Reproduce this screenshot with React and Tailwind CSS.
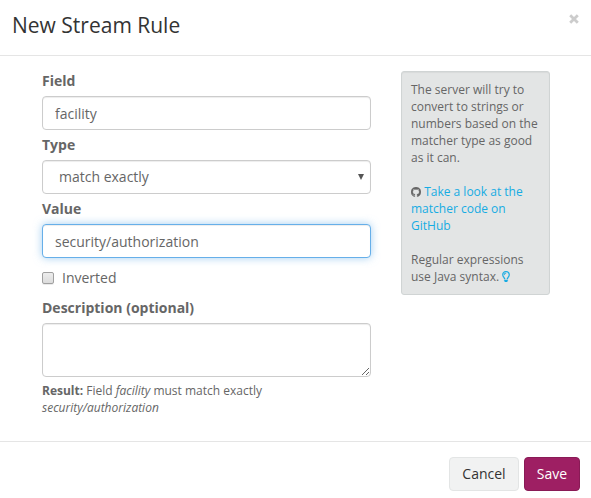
import React from "react";
import { FaRegLightbulb } from "react-icons/fa";

const control =
  "block w-full h-[34px] rounded border border-[#ccc] bg-white px-3 py-1.5 text-sm leading-5 text-[#666] shadow-[inset_0_1px_1px_rgba(0,0,0,0.075)] outline-none";

function Label({ children }) {
  return <label className="mb-[5px] block font-bold leading-5">{children}</label>;
}

function GithubIcon() {
  return (
    <svg className="inline-block h-[10px] w-[10px] align-[-1px]" viewBox="128 128 1536 1536" preserveAspectRatio="none" fill="currentColor" stroke="currentColor" strokeWidth="50">
      <path d="M896 128q209 0 385.5 103t279.5 279.5 103 385.5q0 251-146.5 451.5t-378.5 277.5q-27 5-40-7t-13-30q0-3 .5-76.5t.5-134.5q0-97-52-142 57-6 102.5-18t94-39 81-66.5 53-105 20.5-150.5q0-119-79-206 37-91-8-204-28-9-81 11t-92 44l-38 24q-93-26-192-26t-192 26q-16-11-42.5-27t-83.5-38.5-85-13.5q-45 113-8 204-79 87-79 206 0 85 20.5 150t52.5 105 80.5 67 94 39 102.5 18q-39 36-49 103-21 10-45 15t-57 5-65.5-21.5-55.5-62.5q-19-32-48.5-52t-49.5-24l-20-3q-21 0-29 4.5t-5 11.5 9 14 13 12l7 5q22 10 43.5 38t31.5 51l10 23q13 38 44 61.5t67 30 69.5 7 55.5-3.5l23-4q0 38 .5 88.5t.5 54.5q0 18-13 30t-40 7q-232-77-378.5-277.5t-146.5-451.5q0-209 103-385.5t279.5-279.5 385.5-103z" />
    </svg>
  );
}

export default function App() {
  return (
    <div className="flex h-[498px] w-[591px] flex-col overflow-hidden bg-white font-['Open_Sans','Noto_Sans',sans-serif] text-sm leading-5 text-[#666]">
      <header className="flex h-14 shrink-0 items-start justify-between border-b border-[#e5e5e5] pl-3 pr-[12px]">
        <h4 className="pt-[10px] text-[21px] leading-[30px] text-[#333]">New Stream Rule</h4>
        <button aria-label="Close" className="mt-[13px] flex h-[11px] w-[10px] items-center justify-center">
          <svg className="h-[10px] w-[10px]" viewBox="0 0 10 10" fill="none" stroke="#ccc" strokeWidth="2.8">
            <path d="M1.2 1.2L8.8 8.8M8.8 1.2L1.2 8.8" />
          </svg>
        </button>
      </header>

      <main className="flex h-[385px] shrink-0 items-start pl-[42px] pt-[15px]">
        <form className="w-[329px]">
          <Label>Field</Label>
          <input className={control} defaultValue="facility" />
          <div className="mt-[5px]">
            <Label>Type</Label>
            <div className={control + " flex items-center justify-between !pl-4 !pr-1.5"}>
              <span>match exactly</span>
              <svg className="h-[6px] w-[6px]" viewBox="0 0 6 6" fill="#555">
                <path d="M0 0H6L3 6Z" />
              </svg>
            </div>
          </div>
          <div className="mt-[5px]">
            <Label>Value</Label>
            <input
              className="block h-[34px] w-full rounded border border-[#66afe9] bg-white px-3 py-1.5 text-sm leading-5 text-[#666] shadow-[inset_0_1px_1px_rgba(0,0,0,0.075),0_0_8px_rgba(102,175,233,0.6)] outline-none"
              defaultValue="security/authorization"
            />
          </div>
          <div className="mt-[10px] flex h-5 items-center gap-2">
            <span
              role="checkbox"
              aria-checked="false"
              className="h-3 w-3 rounded-[2px] border border-[#a0a0a0] bg-linear-to-b from-[#ededed] to-[#dcdcdc] shadow-[0_1px_0_rgba(0,0,0,0.08)]"
            />
            <span>Inverted</span>
          </div>
          <div className="mt-[10px]">
            <Label>Description (optional)</Label>
            <textarea className="block h-[54px] w-full resize-y rounded border border-[#ccc] bg-white px-3 py-1.5 shadow-[inset_0_1px_1px_rgba(0,0,0,0.075)] outline-none" />
          </div>
          <p className="mt-[5px] w-[240px] text-xs leading-[17px]">
            <strong>Result:</strong> Field <em>facility</em> must match exactly <em>security/authorization</em>
          </p>
        </form>

        <aside className="ml-[30px] h-[224px] w-[149px] rounded-[3px] border border-[#d0d4d4] bg-[#e3e5e5] px-[9px] pt-[9px] text-xs leading-[17px] shadow-[inset_0_1px_1px_rgba(0,0,0,0.05)]">
          <p className="whitespace-nowrap">
            The server will try to
            <br />
            convert to strings or
            <br />
            numbers based on the
            <br />
            matcher type as good
            <br />
            as it can.
          </p>
          <p className="mt-[17px] whitespace-nowrap">
            <GithubIcon />{" "}
            <a className="text-[#16ace3]">
              Take a look at the
              <br />
              matcher code on
              <br />
              GitHub
            </a>
          </p>
          <p className="mt-[17px] whitespace-nowrap">
            Regular expressions
            <br />
            use Java syntax.{" "}
            <FaRegLightbulb
              className="-ml-[0.6px] inline-block h-[11px] w-[8px] align-[-1px] text-[#16ace3]"
              stroke="currentColor"
              strokeWidth="10"
            />
          </p>
        </aside>
      </main>

      <footer className="flex grow items-start justify-end gap-[5px] border-t border-[#e5e5e5] pr-[11px] pt-[15px]">
        <button className="h-[34px] w-[70px] rounded border border-[#e3e5e5] bg-[#f1f2f2] text-[#333]">Cancel</button>
        <button className="h-[34px] w-[56px] rounded border border-[#891b56] bg-[#9e1f63] text-white">Save</button>
      </footer>
    </div>
  );
}
